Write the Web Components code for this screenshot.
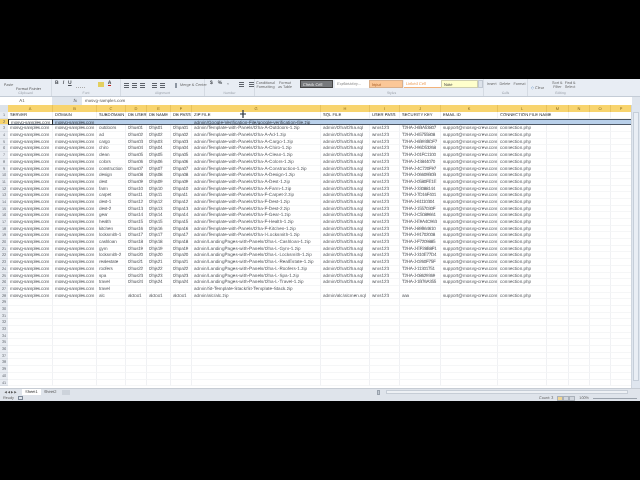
<!DOCTYPE html>
<html>
<head>
<meta charset="utf-8">
<title>Sheet</title>
<style>
    html, body { margin: 0; padding: 0; background: #000; width: 640px; height: 480px; overflow: hidden; }
    body { display: flex; flex-direction: column; padding: 79px 0; box-sizing: border-box; font-family: "Liberation Sans", sans-serif; text-rendering: geometricPrecision; }
</style>
</head>
<body>
<x-workbook>
    <x-ribbon></x-ribbon>
    <x-formula-bar ref="A1" value="mosvg-samples.com"></x-formula-bar>
    <x-sheet></x-sheet>
    <x-tabs></x-tabs>
    <x-status></x-status>
</x-workbook>

<script>
customElements.define('x-workbook', class extends HTMLElement {
    constructor() {
        super();
        this.attachShadow({mode: 'open'}).innerHTML = `
            <style>
                :host { display: flex; flex-direction: column; height: 322px; background: #e9edf3; filter: blur(0.35px); overflow: hidden; }
            </style>
            <slot></slot>
        `;
    }
});

customElements.define('x-ribbon', class extends HTMLElement {
    constructor() {
        super();
        this.attachShadow({mode: 'open'}).innerHTML = `
            <style>
                :host { display: flex; height: 17px; flex: none; background: #e8edf4; border-bottom: 1px solid #c4ccd6; color: #666; font-size: 3.8px; line-height: 4px; }
                .group { position: relative; flex: none; display: flex; align-items: flex-start; gap: 2px; padding: 2px 1px 0 3px; box-sizing: border-box; border-right: 1px solid #d5dbe3; }
                .label { position: absolute; left: 0; right: 0; top: 12px; text-align: center; color: #9aa0a9; font-size: 3.4px; }
                .stack { text-align: center; }
                .ico { font-weight: bold; font-size: 5px; color: #4a4e54; }
                .bars { width: 5px; height: 5px; margin-top: 1px; flex: none; background: repeating-linear-gradient(#5d626a 0 1px, #e8edf4 1px 2px); }
                .style { flex: none; width: 34px; height: 8px; padding-left: 2px; box-sizing: border-box; font-size: 4px; line-height: 7px; }
            </style>
            <div class="group" style="width:52px">
                <div class="stack" style="margin-top:2px;width:11px">Paste</div>
                <div style="margin-top:6px;white-space:nowrap;color:#555">Format Painter</div>
                <div class="label">Clipboard</div>
            </div>
            <div class="group" style="width:69px;padding-left:3px;gap:4px">
                <span class="ico">B</span><span class="ico" style="font-style:italic">I</span><span class="ico" style="text-decoration:underline">U</span>
                <span style="width:9px;height:2px;margin-top:4px;border-bottom:1px dotted #aaa"></span>
                <span style="width:6px;height:5px;margin-top:1px;background:#e3cf5e;margin-left:9px"></span>
                <span class="ico" style="color:#444;border-bottom:1px solid #c8241c;line-height:4px">A</span>
                <div class="label">Font</div>
            </div>
            <div class="group" style="width:84px;gap:3px;padding-top:3px">
                <span class="bars"></span><span class="bars"></span><span class="bars"></span>
                <span class="bars" style="margin-left:4px"></span><span class="bars"></span>
                <span style="margin-left:7px;border:1px solid #8d96a2;width:3px;height:3px;margin-top:1px"></span>
                <span style="white-space:nowrap;margin-top:1px">Merge &amp; Center</span>
                <div class="label">Alignment</div>
            </div>
            <div class="group" style="width:50px;gap:5px;padding-left:5px">
                <span class="ico">$</span><span class="ico">%</span><span class="ico">,</span>
                <span class="bars" style="margin-left:5px"></span><span class="bars"></span>
                <div class="label">Number</div>
            </div>
            <div class="group" style="width:45px;gap:3px;padding-top:2px;padding-left:1px;border:0">
                <div class="stack">Conditional<br>Formatting</div>
                <div class="stack">Format<br>as Table</div>
            </div>
            <div class="group" style="width:184px;gap:0;padding:1px 0 0 0">
                <div class="style" style="background:#77797c;color:#eee;border:1px solid #444;width:33px">Check Cell</div>
                <div class="style" style="background:#fff;color:#888;font-style:italic;margin-left:2px">Explanatory...</div>
                <div class="style" style="background:#fbc797;color:#a75c25;border:1px solid #d9b08c">Input</div>
                <div class="style" style="background:#fff;color:#ec9a52;margin-left:1px;border-bottom:1px solid #f2b27a;width:37px">Linked Cell</div>
                <div class="style" style="background:#ffffcc;color:#444;border:1px solid #cfcfb0;width:37px">Note</div>
                <div style="width:6px;height:8px;background:#dde3eb;border:1px solid #c0c7d1;box-sizing:border-box"></div>
                <div class="label">Styles</div>
            </div>
            <div class="group" style="width:44px;gap:3px;padding-top:3px">
                <span>Insert</span><span>Delete</span><span>Format</span>
                <div class="label">Cells</div>
            </div>
            <div class="group" style="width:65px;gap:7px;padding-top:2px;border:0">
                <span style="margin-top:5px;white-space:nowrap"><span style="color:#3f77b8">&#9671;</span> Clear</span>
                <div class="stack" style="margin-left:1px">Sort &amp;<br>Filter</div>
                <div class="stack" style="margin-left:-5px">Find &amp;<br>Select</div>
                <div class="label">Editing</div>
            </div>
        `;
    }
});

customElements.define('x-formula-bar', class extends HTMLElement {
    constructor() {
        super();
        const shadowRoot = this.attachShadow({mode: 'open'});
        shadowRoot.innerHTML = `
            <style>
                :host { display: flex; height: 8px; flex: none; align-items: stretch; gap: 1px; background: #dfe5ed; font-size: 4.4px; line-height: 8px; color: #555; }
                .name { width: 52px; background: #fff; text-align: center; padding-right: 8px; box-sizing: border-box; }
                .btns { width: 28px; text-align: right; padding-right: 4px; box-sizing: border-box; font-style: italic; }
                .value { flex: 1; background: #fff; padding-left: 3px; margin-right: 8px; }
            </style>
            <div class="name" id="ref"></div>
            <div class="btns">fx</div>
            <div class="value" id="value"></div>
        `;
        shadowRoot.querySelector('#ref').textContent = this.getAttribute('ref');
        shadowRoot.querySelector('#value').textContent = this.getAttribute('value');
    }
});

customElements.define('x-sheet', class extends HTMLElement {
    constructor() {
        super();
        const shadowRoot = this.attachShadow({mode: 'open'});

        const host = 'mosvg-samples.com';
        const tp = 'admin/Template-with-Panels/t2ha-';
        const lp = 'admin/LandingPages-with-Panels/t2ha-L-';
        const list = [
            ['outdoors', tp + 'A-Outdoors-1.zip', '6BA53807'], ['ad', tp + 'A-Ad-1.zip', '65755808'],
            ['cargo', tp + 'A-Cargo-1.zip', '6B93BDF7'], ['chiro', tp + 'A-Chiro-1.zip', '96D53268'],
            ['clean', tp + 'A-Clean-1.zip', '01FC1100'], ['colors', tp + 'A-Colors-1.zip', '43844070'],
            ['construction', tp + 'A-Construction-1.zip', '4C720F97'], ['design', tp + 'A-Design-1.zip', '06609B0B'],
            ['dest', tp + 'A-Dest-1.zip', '0580FE1E'], ['farm', tp + 'A-Farm-1.zip', '33088144'],
            ['carpet', tp + 'F-Carpet-2.zip', '7D16F401'], ['dest-1', tp + 'F-Dest-1.zip', '61110304'],
            ['dest-2', tp + 'F-Dest-2.zip', '1557030F'], ['gear', tp + 'F-Gear-1.zip', 'C5089661'],
            ['health', tp + 'F-Health-1.zip', 'E9A4C963'], ['kitchen', tp + 'F-Kitchen-1.zip', '89B64610'],
            ['locksmith-1', tp + 'I-Locksmith-1.zip', '91702008'], ['cashloan', lp + 'Cashloan-1.zip', 'F7209885'],
            ['gym', lp + 'Gym-1.zip', 'EF28B8F1'], ['locksmith-2', lp + 'Locksmith-1.zip', '310E77D4'],
            ['realestate', lp + 'RealEstate-1.zip', '0260F75F'], ['roofers', lp + 'Roofers-1.zip', '11301751'],
            ['spa', lp + 'Spa-1.zip', '08629369'], ['travel', lp + 'Travel-1.zip', '1B76A355']
        ];

        const two = n => (n < 10 ? '0' : '') + n;
        const rows = [
            ['SERVER', 'DOMAIN', 'SUBDOMAIN', 'DB USER', 'DB NAME', 'DB PASS', 'ZIP FILE', 'SQL FILE', 'USER PASS', 'SECURITY KEY', 'EMAIL ID', 'CONNECTION FILE NAME'],
            [host, host, '', '', '', '', 'admin/Google-Verification-File/google-verification-file.zip', '', '', '', '', '']
        ];
        list.forEach((item, i) => {
            const n = two(i + 1);
            rows.push([host, host, item[0], 't2hus' + n, 't2hjs' + n, 't2hpa' + n, item[1], 'admin/t2ha/t2ha.sql', 'wms123', 'T2HA-J-' + item[2], 'support@mosvg-crew.com', 'connection.php']);
        });
        rows.push([host, host, 'travel', '', '', '', 'admin/St-Template-Stack/St-Template-Stack.zip', '', '', '', '', '']);
        rows.push([host, host, 'alc', 'alctoo1', 'alctoo1', 'alctoo1', 'admin/alc/alc.zip', 'admin/alc/alcmen.sql', 'wms123', 'aaa', 'support@mosvg-crew.com', 'connection.php']);

        // one font size keeps the baselines level, columns are fitted with tracking
        const tracking = [-0.17, -0.17, -0.1, -0.2, -0.2, -0.2, 0.03, 0, 0, -0.3, 0, 0, 0, 0, 0, 0];
        const letters = 'ABCDEFGHIJKLMNOP'.split('');
        let html = '<div class="corner"></div>' + letters.map(l => `<div class="col">${l}</div>`).join('');
        for (let r = 1; r <= 41; r++) {
            const data = rows[r - 1] || [];
            const active = r === 2;
            html += `<div class="num${active ? ' on' : ''}">${r}</div>`;
            letters.forEach((l, c) => {
                let cls = 'cell';
                if (active) cls += c === 0 ? ' sel first' : ' sel';
                if (r === 1) cls += ' head';
                const style = r === 1 ? '' : `letter-spacing:${tracking[c]}px`;
                html += `<div class="${cls}" style="${style}">${data[c] || ''}</div>`;
            });
        }

        shadowRoot.innerHTML = `
            <style>
                :host { display: flex; flex: 1; min-height: 0; background: #fff; color: #54575c; font-size: 4.6px; position: relative; overflow: hidden; }
                .grid { flex: 1; display: grid; align-content: start; overflow: hidden;
                    grid-template-columns: 8px 45px 44px 29px 21px 24px 21px 129px 49px 30px 41px 57px 49px 22px 21px 21px 21px;
                    grid-template-rows: 7px; grid-auto-rows: 6.7px; line-height: 6.7px; }
                .grid > div { white-space: nowrap; box-sizing: border-box; min-width: 0; }
                .corner { background: #dde3ea; }
                .col { background: #f8d46e; border-right: 1px solid #e8c25c; text-align: center; font-size: 4px; color: #8a6a1d; line-height: 7px; }
                .num { background: #e7ebf1; border-bottom: 1px solid #d9dee5; text-align: center; font-size: 3.8px; color: #666b73; }
                .num.on { background: #f8d46e; }
                .cell { padding-left: 2px; border-right: 1px solid #f0f1f4; border-bottom: 1px solid #f5f6f7; overflow: visible; }
                .head { color: #26282c; font-size: 4.2px; }
                .sel { background: #b9d0ea; color: #3a3f47; border-right: 0; border-top: 1px solid #4d5765; border-bottom: 1px solid #4d5765; line-height: 5px; }
                .sel.first { background: #fff; border-left: 1px solid #222; border-right: 1px solid #222; }
                .bar { width: 8px; flex: none; background: #dfe6ef; border-left: 1px solid #cfd6df; display: flex; flex-direction: column; align-items: center; }
                .thumb { width: 6px; flex: 1; margin: 7px 0 7px; background: #e9eef5; border: 1px solid #c5ced9; box-sizing: border-box; }
                .cursor { position: absolute; left: 240px; top: 5px; }
            </style>
            <div class="grid">${html}</div>
            <div class="bar"><div class="thumb"></div></div>
            <svg class="cursor" width="6" height="8" viewBox="0 0 6 8"><path d="M3 0v8M0 4h6" stroke="#27303c" stroke-width="1.2"/></svg>
        `;
    }
});

customElements.define('x-tabs', class extends HTMLElement {
    constructor() {
        super();
        this.attachShadow({mode: 'open'}).innerHTML = `
            <style>
                :host { display: flex; height: 6px; flex: none; align-items: center; background: #dfe4eb; font-size: 4px; line-height: 6px; color: #555; border-top: 1px solid #c6ccd4; }
                .nav { width: 22px; text-align: center; font-size: 3px; letter-spacing: 1px; flex: none; }
                .tab { padding: 0 3px; }
                .tab.on { background: #fff; color: #333; }
                .add { width: 8px; height: 5px; background: #cdd3db; margin-left: 3px; }
                .split { margin-left: 307px; width: 3px; height: 5px; background: #c2c9d2; border: 1px solid #99a2ad; box-sizing: border-box; flex: none; }
                .track { flex: 1; margin: 0 12px 0 6px; height: 4px; background: #eef1f5; border: 1px solid #c6cdd6; box-sizing: border-box; }
            </style>
            <div class="nav">&#9664;&#9664;&#9654;&#9654;</div>
            <div class="tab on">Sheet1</div>
            <div class="tab">Sheet2</div>
            <div class="add"></div>
            <div class="split"></div>
            <div class="track"></div>
        `;
    }
});

customElements.define('x-status', class extends HTMLElement {
    constructor() {
        super();
        this.attachShadow({mode: 'open'}).innerHTML = `
            <style>
                :host { display: flex; height: 6px; flex: none; align-items: center; background: #dfe4eb; font-size: 3.8px; color: #666; padding: 0 3px; gap: 4px; }
                .macro { width: 5px; height: 4px; border: 1px solid #7b8796; box-sizing: border-box; }
                .fill { flex: 1; }
                .view { width: 6px; height: 5px; background: #d2d7de; border: 1px solid #aab1ba; box-sizing: border-box; }
                .view.on { background: #f1d694; }
                .slider { width: 44px; height: 1px; background: #9aa2ac; }
            </style>
            <span>Ready</span>
            <span class="macro"></span>
            <span class="fill"></span>
            <span>Count: 3</span>
            <span style="display:flex;gap:0"><span class="view on"></span><span class="view"></span><span class="view"></span></span>
            <span>100%</span>
            <span class="slider"></span>
        `;
    }
});
</script>
</body>
</html>
